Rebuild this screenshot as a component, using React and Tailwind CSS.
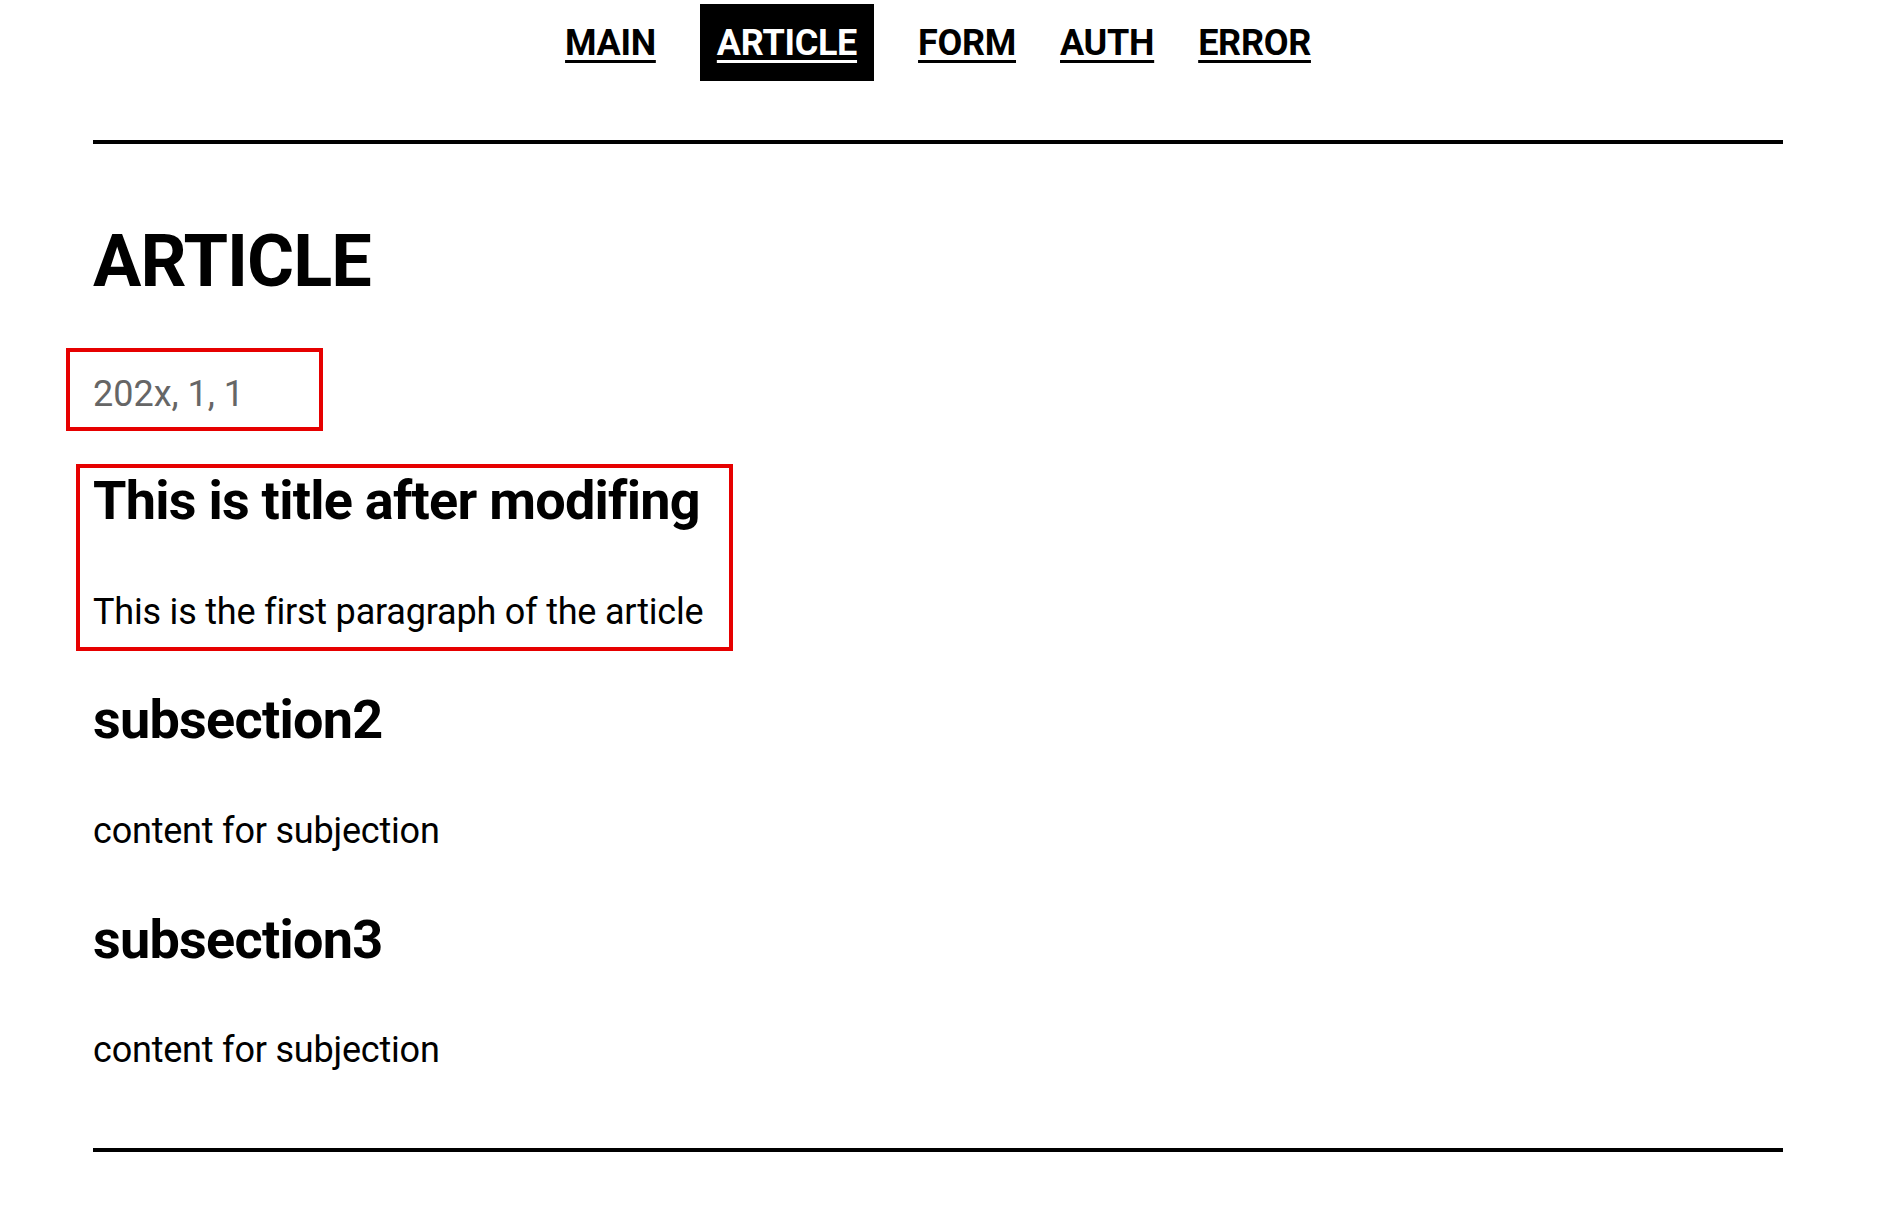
import React from "react";

const links = ["MAIN", "ARTICLE", "FORM", "AUTH", "ERROR"];

const Nav = ({ active }) => {
    return (
        <nav className="flex justify-center gap-[44px] pt-[4px]">
            {links.map((name) => (
                <a
                    key={name}
                    href="#"
                    className={
                        name === active
                            ? "flex h-[77px] items-center bg-black px-[17px] text-white"
                            : "flex h-[77px] items-center text-black"
                    }
                >
                    <span className="text-[36px] leading-[42px] font-bold tracking-[-0.3px] underline decoration-[3px] underline-offset-[5px]">
                        {name}
                    </span>
                </a>
            ))}
        </nav>
    );
};

const App = () => {
    return (
        <div className="min-h-screen bg-white font-['Roboto',sans-serif] text-black">
            <div className="ml-[93px] w-[1690px] pb-[40px]">
                <Nav active="ARTICLE" />
                <hr className="mt-[59px] h-[4px] border-0 bg-black" />

                <h1 className="mt-[76px] text-[72px] leading-[84px] font-bold tracking-[-1px]">ARTICLE</h1>

                <div className="-ml-[27px] mt-[44px] box-border h-[83px] w-[257px] border-[4px] border-[#e60000] pl-[23px] pt-[21px]">
                    <span className="text-[36px] leading-[42px] text-[#666666]">202x, 1, 1</span>
                </div>

                <section className="-ml-[17px] mt-[33px] box-border w-[657px] border-[4px] border-[#e60000] pl-[13px] pt-[1px] pb-[14px]">
                    <h2 className="text-[54px] leading-[64px] font-bold tracking-[-0.75px]">This is title after modifing</h2>
                    <p className="mt-[58px] text-[36px] leading-[42px] tracking-[-0.2px]">This is the first paragraph of the article</p>
                </section>

                <section className="mt-[37px]">
                    <h2 className="text-[54px] leading-[64px] font-bold tracking-[-0.75px]">subsection2</h2>
                    <p className="mt-[58px] text-[36px] leading-[42px] tracking-[-0.2px]">content for subjection</p>
                </section>

                <section className="mt-[56px]">
                    <h2 className="text-[54px] leading-[64px] font-bold tracking-[-0.75px]">subsection3</h2>
                    <p className="mt-[57px] text-[36px] leading-[42px] tracking-[-0.2px]">content for subjection</p>
                </section>

                <hr className="mt-[77px] h-[4px] border-0 bg-black" />
            </div>
        </div>
    );
};

export default App;
